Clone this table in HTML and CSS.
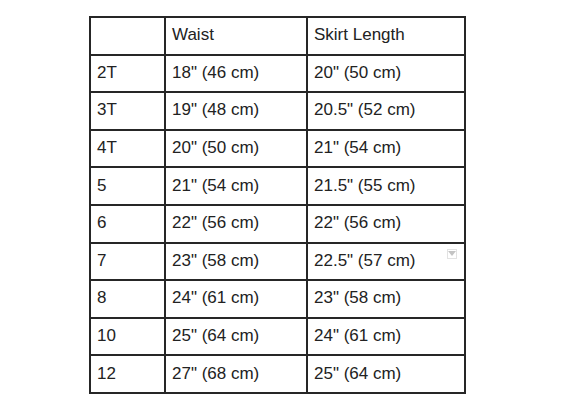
FILE: index.html
```html
<!DOCTYPE html>
<html>
<head>
<meta charset="utf-8">
<link rel="stylesheet" href="styles.css">
</head>
<body>
<div class="page">
  <div class="chart">
    <div class="cell"></div><div class="cell">Waist</div><div class="cell">Skirt Length</div>
    <div class="cell">2T</div><div class="cell">18" (46 cm)</div><div class="cell">20" (50 cm)</div>
    <div class="cell">3T</div><div class="cell">19" (48 cm)</div><div class="cell">20.5" (52 cm)</div>
    <div class="cell">4T</div><div class="cell">20" (50 cm)</div><div class="cell">21" (54 cm)</div>
    <div class="cell">5</div><div class="cell">21" (54 cm)</div><div class="cell">21.5" (55 cm)</div>
    <div class="cell">6</div><div class="cell">22" (56 cm)</div><div class="cell">22" (56 cm)</div>
    <div class="cell">7</div><div class="cell">23" (58 cm)</div><div class="cell has-menu">22.5" (57 cm)<span class="menu-btn"><svg width="8" height="5" viewBox="0 0 8 5"><path d="M0 0 L8 0 L4 5 Z" fill="#c4c4c4"/></svg></span></div>
    <div class="cell">8</div><div class="cell">24" (61 cm)</div><div class="cell">23" (58 cm)</div>
    <div class="cell">10</div><div class="cell">25" (64 cm)</div><div class="cell">24" (61 cm)</div>
    <div class="cell">12</div><div class="cell">27" (68 cm)</div><div class="cell">25" (64 cm)</div>
  </div>
</div>
</body>
</html>
```
FILE: styles.css
```css
html, body {
  margin: 0;
  padding: 0;
  background: #ffffff;
}
.page {
  padding: 16px 0 0 89px;
}
.chart {
  display: grid;
  grid-template-columns: 73px 140px 156px;
  grid-template-rows: repeat(10, 35.6px);
  gap: 2px;
  padding: 2px;
  width: max-content;
  background: #262626;
  font-family: "Liberation Sans", Arial, sans-serif;
  font-size: 17px;
  color: #222222;
}
.cell {
  background: #ffffff;
  display: flex;
  align-items: center;
  padding: 0 0 1px 6px;
}
.has-menu {
  position: relative;
}
.menu-btn {
  position: absolute;
  top: 5px;
  right: 7px;
  width: 10px;
  height: 10px;
  border: 1px solid #e2e2e2;
  box-sizing: border-box;
  display: flex;
  align-items: center;
  justify-content: center;
}
```
